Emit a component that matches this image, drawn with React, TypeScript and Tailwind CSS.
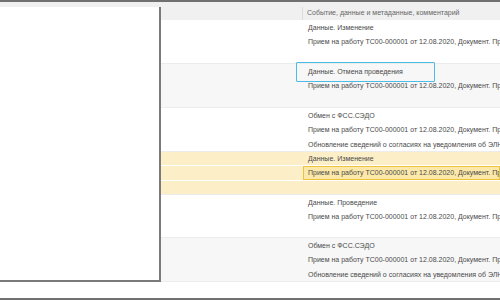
import React from 'react';

const LINE1 = 'Прием на работу ТС00-000001 от 12.08.2020, Документ. Прием на работу';
const LINE2 = 'Обновление сведений о согласиях на уведомления об ЭЛН: Иванов И.И.';

type Group = {
  lines: string[];
  tone: 'white' | 'gray' | 'yellow';
  h: string;
};

const groups: Group[] = [
  { lines: ['Данные. Изменение', LINE1, ''], tone: 'white', h: 'h-[44px]' },
  { lines: ['Данные. Отмена проведения', LINE1, ''], tone: 'gray', h: 'h-[44px]' },
  { lines: ['Обмен с ФСС.СЭДО', LINE1, LINE2], tone: 'white', h: 'h-[44px]' },
  { lines: ['Данные. Изменение', LINE1, ''], tone: 'yellow', h: 'h-[43px]' },
  { lines: ['Данные. Проведение', LINE1, ''], tone: 'white', h: 'h-[43px]' },
  { lines: ['Обмен с ФСС.СЭДО', LINE1, LINE2], tone: 'gray', h: 'h-[44px]' },
];

function EventGroup({ g }: { g: Group }) {
  const yellow = g.tone === 'yellow';
  const bg = g.tone === 'gray' ? 'bg-[#f7f7f7]' : 'bg-white';

  return (
    <div className={`${g.h} flex flex-col border-b border-[#ececec] ${yellow ? 'gap-px bg-white' : bg}`}>
      {g.lines.map((text, i) => {
        const selected = yellow && i === 1;
        return (
          <div key={i} className={`flex flex-1 ${yellow ? 'bg-[#fcefc7]' : ''}`}>
            <div className="w-[142px] shrink-0" />
            <div
              className={`flex-1 min-w-0 flex items-center whitespace-nowrap overflow-hidden ${
                selected ? 'border border-[#eec23a] bg-[#fce9a9] pl-[4px] pt-px' : 'pl-[5px] pt-[2px]'
              }`}
            >
              {text}
            </div>
          </div>
        );
      })}
    </div>
  );
}

export default function App() {
  return (
    <div
      className="w-[500px] h-[300px] overflow-hidden bg-white flex flex-col text-[7px] text-[#4a4a4a]"
      style={{ fontFamily: '"Liberation Sans", Arial, sans-serif' }}
    >
      <div className="h-[2px] bg-[#707070]" />
      <div className="h-[5px] bg-[#f0f0f0]" />

      <div className="h-[275px] flex">
        <div className="w-[161px] shrink-0 bg-white border-r-2 border-b-2 border-[#7a7a7a]" />

        <div className="relative flex-1 min-w-0 flex flex-col">
          <div className="h-[13px] flex bg-[#f0f0f0] text-[#666]">
            <div className="w-[142px] shrink-0 border-r border-[#dcdcdc]" />
            <div className="flex-1 flex items-center pl-[4px] whitespace-nowrap overflow-hidden">
              Событие, данные и метаданные, комментарий
            </div>
          </div>

          {groups.map((g, i) => (
            <EventGroup key={i} g={g} />
          ))}

          {/* focus frame over the current cell */}
          <div className="absolute left-[135px] top-[55px] w-[139px] h-[20px] border border-[#4cbbe6] rounded-[1px] pointer-events-none" />
        </div>
      </div>

      <div className="flex-1 bg-white" />
      <div className="h-[2px] bg-[#707070]" />
    </div>
  );
}
